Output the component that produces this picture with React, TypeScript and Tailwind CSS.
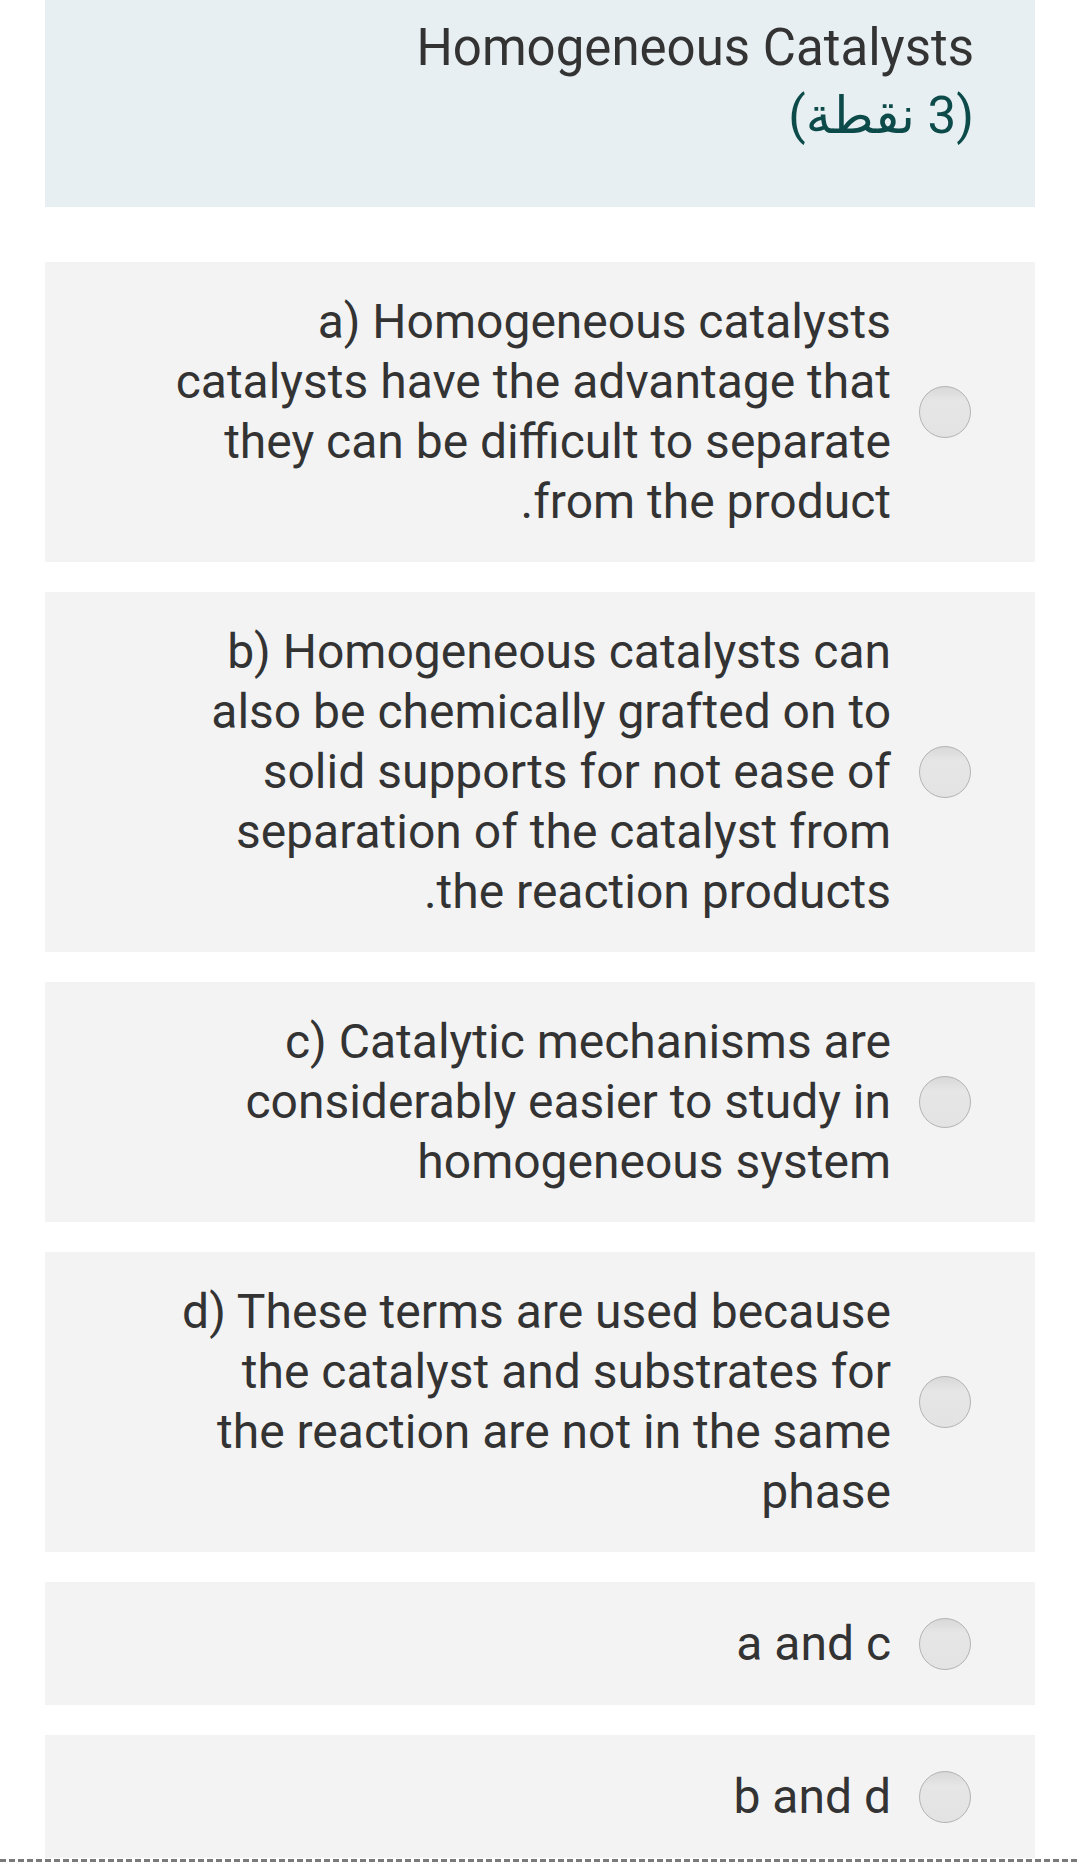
const options = [
  'a) Homogeneous catalysts catalysts have the advantage that they can be difficult to separate from the product.',
  'b) Homogeneous catalysts can also be chemically grafted on to solid supports for not ease of separation of the catalyst from the reaction products.',
  'c) Catalytic mechanisms are considerably easier to study in homogeneous system',
  'd) These terms are used because the catalyst and substrates for the reaction are not in the same phase',
  'a and c',
  'b and d',
];

const Radio = () => (
  <span className="shrink-0 w-[52px] h-[52px] rounded-full border border-[#b3b3b3] bg-[linear-gradient(180deg,#d8d8d8_0%,#e6e6e6_28%,#e3e3e3_100%)]" />
);

const Option = ({ label }: { label: string }) => (
  <label
    dir="rtl"
    className="mx-[45px] min-h-[123px] flex items-center gap-[28px] bg-[#f3f3f3] py-[30px] ps-[64px]"
  >
    <Radio />
    <span className="w-[720px] text-[48px] leading-[60px] text-[#333333]">{label}</span>
  </label>
);

export default function App() {
  return (
    <div className="w-[1080px] h-[1874px] bg-white overflow-hidden font-['Roboto','DejaVu_Sans',sans-serif]">
      <div className="mx-[45px] h-[207px] bg-[#e7eff2] pt-[14px] pr-[61px] text-right text-[51px] leading-[68px]">
        <div className="text-[#333333]">Homogeneous Catalysts</div>
        <div dir="rtl" className="text-[#0d4b4b]">(3 نقطة)</div>
      </div>

      <div className="mt-[55px] flex flex-col gap-[30px]">
        {options.map((o) => (
          <Option key={o} label={o} />
        ))}
      </div>

      <div className="mt-px h-[3px] bg-[repeating-linear-gradient(90deg,#7a7a7a_0px,#7a7a7a_6px,transparent_6px,transparent_9px)]" />
    </div>
  );
}
